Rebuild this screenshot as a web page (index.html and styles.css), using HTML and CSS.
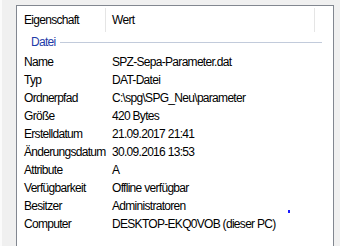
FILE: index.html
```html
<!DOCTYPE html>
<html lang="de">
<head>
    <meta charset="UTF-8">
    <title>Details</title>
    <link rel="stylesheet" href="styles.css">
</head>
<body>
    <div class="list">
        <div class="head">
            <div class="col-name">Eigenschaft</div>
            <div class="col-value">Wert</div>
            <div class="col-rest"></div>
        </div>

        <div class="group">
            <span class="group-title">Datei</span>
            <span class="group-line"></span>
        </div>

        <div class="row"><span class="key">Name</span><span>SPZ-Sepa-Parameter.dat</span></div>
        <div class="row"><span class="key">Typ</span><span>DAT-Datei</span></div>
        <div class="row"><span class="key">Ordnerpfad</span><span>C:\spg\SPG_Neu\parameter</span></div>
        <div class="row"><span class="key">Größe</span><span>420 Bytes</span></div>
        <div class="row"><span class="key">Erstelldatum</span><span>21.09.2017 21:41</span></div>
        <div class="row"><span class="key">Änderungsdatum</span><span>30.09.2016 13:53</span></div>
        <div class="row"><span class="key">Attribute</span><span>A</span></div>
        <div class="row"><span class="key">Verfügbarkeit</span><span>Offline verfügbar</span></div>
        <div class="row"><span class="key">Besitzer</span><span>Administratoren</span></div>
        <div class="row"><span class="key">Computer</span><span>DESKTOP-EKQ0VOB (dieser PC)</span></div>

        <span class="dot"></span>
    </div>
</body>
</html>
```

FILE: styles.css
```css
html {
    overflow: hidden;
}

body {
    margin: 0;
    height: 241px;
    overflow: hidden;
    background-color: #f0f0f0;
    border-left: 2px solid #fbfbfb;
    padding: 5px 6px 0 14px;
    font-family: "Liberation Sans", Arial, sans-serif;
    font-size: 12px;
    letter-spacing: -0.7px;
    color: #000;
}

.list {
    position: relative;
    background-color: white;
    border: 1px solid #828790;
    border-bottom: none;
    height: 240px;
}

.head {
    display: flex;
    height: 24px;
    padding: 2px 0 1px;
    line-height: 24px;
}

.col-name {
    width: 81px;
    padding-left: 7px;
    border-right: 1px solid #e5e5e5;
}

.col-value {
    width: 202px;
    padding-left: 6px;
    border-right: 1px solid #e5e5e5;
}

.group {
    display: flex;
    align-items: center;
    height: 18px;
    margin-bottom: 2px;
}

.group-title {
    padding-left: 14px;
    color: #1e3ca8;
}

.group-line {
    flex: 1;
    height: 1px;
    margin: 1px 11px 0 4px;
    background-color: #c2cbdb;
}

.row {
    display: flex;
    height: 18px;
    line-height: 18px;
    white-space: nowrap;
}

.key {
    flex: none;
    width: 88px;
    padding-left: 7px;
}

.dot {
    position: absolute;
    left: 271px;
    top: 204px;
    width: 2px;
    height: 3px;
    background-color: #1a1aff;
}
```
